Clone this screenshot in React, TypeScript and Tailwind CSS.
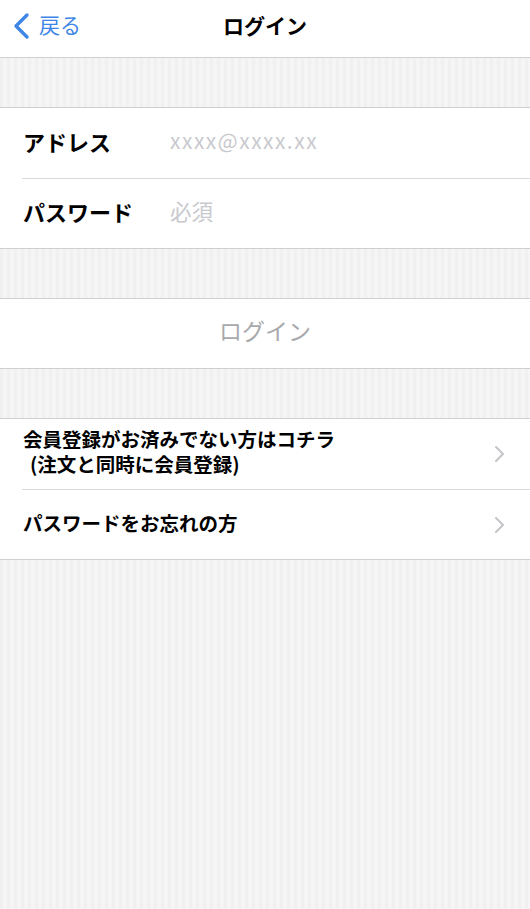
import React from "react";

const font = { fontFamily: '"Noto Sans CJK JP", "Noto Sans", sans-serif' };

function Chevron() {
  return (
    <svg width="12" height="18" viewBox="0 0 12 18" className="shrink-0">
      <path d="M3 2 L10 9 L3 16" fill="none" stroke="#c4c4c9" strokeWidth="2" strokeLinecap="round" strokeLinejoin="round" />
    </svg>
  );
}

function Gap() {
  return (
    <div className="h-[49px] bg-[repeating-linear-gradient(90deg,#f0f0f1_0px,#f0f0f1_3px,#f5f5f6_3px,#f5f5f6_7px)]" />
  );
}

export default function App() {
  return (
    <div
      className="w-[530px] min-h-[909px] flex flex-col bg-[repeating-linear-gradient(90deg,#f0f0f1_0px,#f0f0f1_3px,#f5f5f6_3px,#f5f5f6_7px)]"
      style={font}
    >
      {/* Nav bar */}
      <div className="h-[58px] bg-white border-b border-[#cfcfd3] relative flex items-center justify-center">
        <div className="absolute left-[12px] top-[12px] flex items-center gap-[7px]">
          <svg width="20" height="28" viewBox="0 0 20 28">
            <path d="M15 3 L4 14 L15 25" fill="none" stroke="#3f86e6" strokeWidth="3.4" strokeLinecap="round" strokeLinejoin="round" />
          </svg>
          <span className="text-[21px] leading-none text-[#3f86e6] -mt-[3px]">戻る</span>
        </div>
        <span className="text-[21px] font-bold text-black leading-none -mt-[6px]">ログイン</span>
      </div>

      <Gap />

      {/* Form */}
      <div className="bg-white border-y border-[#cfcfd3]">
        <div className="h-[70px] flex items-center pl-[23px]">
          <span className="w-[147px] text-[22px] font-bold text-black leading-none -mt-[5px]">アドレス</span>
          <span className="text-[21px] text-[#c9c9ce] leading-none tracking-[1.5px] -mt-[5px]">xxxx@xxxx.xx</span>
        </div>
        <div className="ml-[22px] h-px bg-[#d9d9dd]" />
        <div className="h-[69px] flex items-center pl-[23px]">
          <span className="w-[147px] text-[22px] font-bold text-black leading-none -mt-[5px]">パスワード</span>
          <span className="text-[21.5px] text-[#c9c9ce] leading-none -mt-[5px]">必須</span>
        </div>
      </div>

      <Gap />

      {/* Login button */}
      <div className="h-[71px] bg-white border-y border-[#cfcfd3] flex items-center justify-center">
        <span className="text-[23px] text-[#a9a9ad] leading-none -mt-[6px]">ログイン</span>
      </div>

      <Gap />

      {/* Links */}
      <div className="bg-white border-y border-[#cfcfd3]">
        <div className="h-[70px] flex items-center justify-between pl-[23px] pr-[25px]">
          <div className="flex flex-col text-[19.5px] font-bold text-black -mt-[4px]">
            <div className="h-[25px] leading-[22px]">会員登録がお済みでない方はコチラ</div>
            <div className="h-[24px] leading-[22px] pl-[7px]">(注文と同時に会員登録)</div>
          </div>
          <Chevron />
        </div>
        <div className="ml-[22px] h-px bg-[#d9d9dd]" />
        <div className="h-[69px] flex items-center justify-between pl-[23px] pr-[25px]">
          <span className="text-[19.5px] font-bold text-black leading-none -mt-[3px]">パスワードをお忘れの方</span>
          <Chevron />
        </div>
      </div>

      <div className="flex-1" />
    </div>
  );
}
